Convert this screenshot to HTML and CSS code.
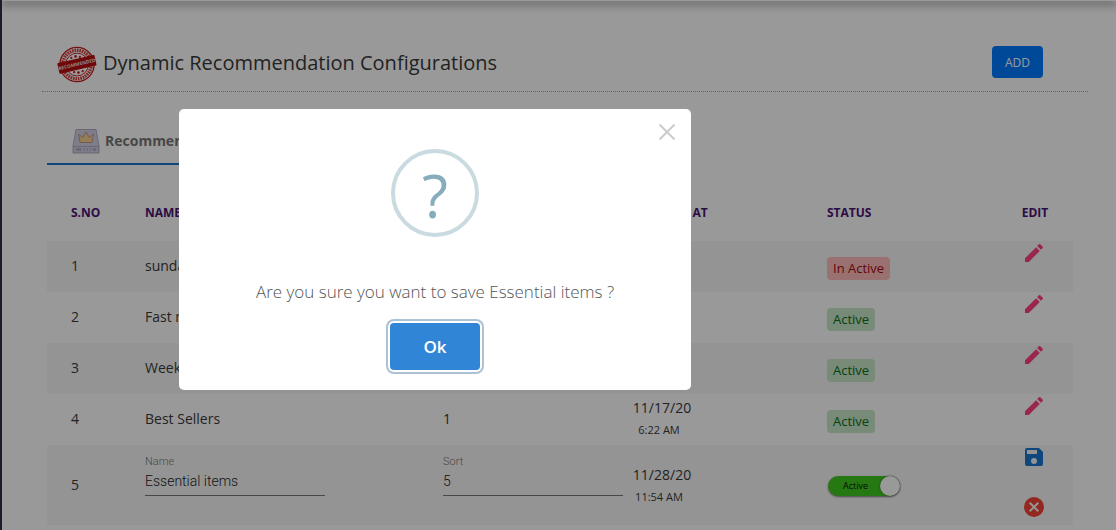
FILE: index.html
```
<!DOCTYPE html>
<html lang="en">
<head>
<meta charset="utf-8">
<title>Dynamic Recommendation Configurations</title>
<link rel="stylesheet" href="styles.css">
</head>
<body>
<svg class="defs" aria-hidden="true">
  <symbol id="pencil" viewBox="0 0 24 24"><path d="M3 17.25V21h3.75L17.81 9.94l-3.75-3.75L3 17.25zM20.71 7.04a1 1 0 0 0 0-1.41l-2.34-2.34a1 1 0 0 0-1.41 0l-1.83 1.83 3.75 3.75 1.83-1.83z"/></symbol>
  <symbol id="save" viewBox="0 0 24 24"><path d="M17 3H5a2 2 0 0 0-2 2v14a2 2 0 0 0 2 2h14a2 2 0 0 0 2-2V7l-4-4zm-5 16a3 3 0 1 1 0-6 3 3 0 0 1 0 6zm3-10H5V5h10v4z"/></symbol>
  <symbol id="cancel" viewBox="0 0 24 24"><path d="M12 2a10 10 0 1 0 0 20 10 10 0 0 0 0-20zm5 13.59L15.59 17 12 13.41 8.41 17 7 15.59 10.59 12 7 8.41 8.41 7 12 10.59 15.59 7 17 8.41 13.41 12 17 15.59z"/></symbol>
</svg>
<div class="topbar"></div>
<main class="page">
  <header class="page-head">
    <svg class="stamp" viewBox="0 0 40 40" aria-hidden="true">
      <circle cx="20" cy="19.500" r="18" fill="none" stroke="#c81e1e" stroke-width="1.400"/>
      <circle cx="20" cy="19.500" r="15" fill="none" stroke="#d04040" stroke-width="3.600" stroke-dasharray="1.700 .9"/>
      <circle cx="20" cy="19.500" r="12" fill="none" stroke="#c81e1e" stroke-width="1"/>
      <g fill="#c81e1e">
        <circle cx="14" cy="12.500" r="1.200"/><circle cx="18.500" cy="11" r="1.400"/><circle cx="23" cy="11.500" r="1.200"/>
        <circle cx="17" cy="27.500" r="1.200"/><circle cx="21.500" cy="28" r="1.400"/><circle cx="26" cy="26.500" r="1.200"/>
      </g>
      <g transform="rotate(-13 20 19.500)">
        <rect x="0" y="13.500" width="40" height="11.500" rx="1" fill="#b80e0e"/>
        <text class="stamp-text" x="20" y="21" text-anchor="middle">RECOMMENDED</text>
      </g>
    </svg>
    <h1 class="title">Dynamic Recommendation Configurations</h1>
    <button class="add" type="button">ADD</button>
  </header>
  <div class="content">
    <nav class="tabs">
      <a class="tab" href="#recommendation">
        <svg class="crown" viewBox="0 0 28 28" aria-hidden="true">
          <path d="M4 2.500h20l3 17H1z" fill="#d3d3e6" stroke="#b9a8c4"/>
          <path d="M1 19.500h26V26H1z" fill="#cfcde2" stroke="#b9a8c4"/>
          <path d="M8 15.500 6.500 7l4.200 3.500L14 5l3.300 5.500L21.500 7 20 15.500z" fill="#f7cf8c" stroke="#c4958c"/>
          <path d="M4 22.500h5M12 22.500h1M15 22.500h1M18 22.500h1M21 22.500h3" stroke="#aaa2bf" stroke-width="2"/>
        </svg>
        Recommendation
      </a>
    </nav>
    <table class="grid">
      <colgroup><col class="c-no"><col class="c-name"><col class="c-sort"><col class="c-date"><col><col class="c-edit"></colgroup>
      <thead>
        <tr><th>S.NO</th><th>NAME</th><th></th><th>UPDATED AT</th><th>STATUS</th><th class="edit">EDIT</th></tr>
      </thead>
      <tbody>
        <tr><td>1</td><td>sunday</td><td></td><td></td><td><span class="badge off">In Active</span></td><td class="edit"><button class="icon pink" type="button" aria-label="Edit"><svg><use href="#pencil"/></svg></button></td></tr>
        <tr><td>2</td><td>Fast moving</td><td></td><td></td><td><span class="badge">Active</span></td><td class="edit"><button class="icon pink" type="button" aria-label="Edit"><svg><use href="#pencil"/></svg></button></td></tr>
        <tr><td>3</td><td>Weekly</td><td></td><td></td><td><span class="badge">Active</span></td><td class="edit"><button class="icon pink" type="button" aria-label="Edit"><svg><use href="#pencil"/></svg></button></td></tr>
        <tr><td>4</td><td>Best Sellers</td><td>1</td><td><div class="stamp-time"><span>11/17/20</span><small>6:22 AM</small></div></td><td><span class="badge">Active</span></td><td class="edit"><button class="icon pink" type="button" aria-label="Edit"><svg><use href="#pencil"/></svg></button></td></tr>
        <tr class="editing">
          <td>5</td>
          <td><div class="field"><label for="name">Name</label><input id="name" type="text" value="Essential items"></div></td>
          <td><div class="field"><label for="sort">Sort</label><input id="sort" type="text" value="5"></div></td>
          <td><div class="stamp-time"><span>11/28/20</span><small>11:54 AM</small></div></td>
          <td><label class="switch"><input type="checkbox" checked><span>Active</span></label></td>
          <td class="edit"><div class="actions"><button class="icon blue" type="button" aria-label="Save"><svg><use href="#save"/></svg></button><button class="icon red" type="button" aria-label="Cancel"><svg><use href="#cancel"/></svg></button></div></td>
        </tr>
      </tbody>
    </table>
  </div>
</main>
<div class="overlay">
  <div class="modal" role="dialog" aria-modal="true" aria-labelledby="question">
    <button class="close" type="button" aria-label="Close"><svg viewBox="0 0 16 16"><path d="M0.500 0.500l15 15M15.500 0.500l-15 15"/></svg></button>
    <div class="mark">?</div>
    <p class="question" id="question">Are you sure you want to save Essential items ?</p>
    <button class="ok" type="button">Ok</button>
  </div>
</div>
</body>
</html>
```

FILE: styles.css
```
* { box-sizing: border-box; }
body {
  margin: 0;
  height: 100vh;
  overflow: hidden;
  border-left: 2px solid #2b3048;
  background: #fff;
  color: #3a3a3a;
  font: 14px/20px "Open Sans", "Noto Sans", sans-serif;
}
button { border: 0; padding: 0; font-family: inherit; cursor: pointer; }
.defs { display: none; }
.topbar { height: 1px; background: #fff; box-shadow: 0 2px 8px 1px rgba(0, 0, 0, .65); }

.page { padding: 44px 28px 0 40px; }
.page-head {
  display: flex;
  align-items: flex-start;
  height: 47px;
  padding: 1px 45px 0 15px;
  border-bottom: 1px dotted #aaa;
}
.stamp { width: 40px; height: 38px; }
.stamp-text { fill: #f2dede; font-size: 5px; font-weight: 700; }
.title { flex: 1; margin: 0 0 0 6px; font-size: 20px; line-height: 34px; font-weight: 400; }
.add { width: 51px; height: 32px; border-radius: 4px; background: #007bff; color: #fff; font-size: 12px; }

.content { padding: 28px 15px 0 5px; }
.tabs { display: flex; }
.tab {
  display: flex;
  align-items: center;
  gap: 5px;
  height: 45px;
  padding: 0 25px 2px;
  border-bottom: 2px solid #1976d2;
  color: #777;
  font-weight: 700;
  text-decoration: none;
}
.crown { width: 28px; height: 28px; }

.grid { width: 100%; margin-top: 20px; border-collapse: collapse; table-layout: fixed; }
.c-no { width: 98px; }
.c-name { width: 298px; }
.c-sort { width: 190px; }
.c-date { width: 194px; }
.c-edit { width: 78px; }
.grid th { height: 56px; padding: 0; color: #4b1374; font-size: 12px; font-weight: 700; text-align: left; }
.grid td { height: 51px; padding: 0 0 2px; }
.grid th:first-child, .grid td:first-child { padding-left: 24px; }
.grid tbody tr:nth-child(odd) { background: #f7f7f7; }
.grid .edit { padding: 0; text-align: center; vertical-align: top; }
.grid th.edit { padding-left: 2px; vertical-align: middle; }
.grid .editing td { padding-bottom: 0; }
.badge {
  display: inline-block;
  margin-top: 6px;
  padding: 0 6px;
  border-radius: 4px;
  background: #c8e6c9;
  color: #0a7016;
  font-size: 13px;
  line-height: 23px;
}
.badge.off { background: #ffbcbc; color: #a80b0f; }
.icon { display: inline-block; width: 24px; height: 24px; background: none; vertical-align: top; }
.icon svg { display: block; width: 24px; height: 24px; fill: currentColor; }
.pink { color: #ff4081; }
.blue { color: #1976d2; }
.red { color: #f44336; }
.actions { display: flex; flex-direction: column; align-items: center; gap: 26px; padding-bottom: 6px; }
.stamp-time { display: inline-flex; flex-direction: column; align-items: center; width: 58px; padding-top: 3px; vertical-align: middle; }
.stamp-time small { font-size: 11px; line-height: 24px; margin-right: 6px; white-space: nowrap; }
.field { display: flex; flex-direction: column; width: 180px; padding: 2px 0 22px; font-family: Roboto, sans-serif; font-weight: 300; }
.field label { color: #777; font-size: 11px; line-height: 16px; }
.field input {
  width: 100%;
  height: 26px;
  padding: 0 0 3px;
  border: 0;
  border-bottom: 1px solid #777;
  background: none;
  color: #212529;
  font: inherit;
}
.switch { display: inline-grid; align-items: center; width: 73px; margin-left: 1px; vertical-align: middle; }
.switch input {
  appearance: none;
  grid-area: 1 / 1;
  display: flex;
  justify-content: flex-end;
  width: 72px;
  height: 20px;
  margin: 0;
  border-radius: 10px;
  background: #3fc91e;
  box-shadow: 0 1px 2px rgba(0, 0, 0, .5);
}
.switch input::before { content: ""; width: 20px; height: 20px; border-radius: 50%; background: #fff; box-shadow: 0 0 2px rgba(0, 0, 0, .6); }
.switch span { grid-area: 1 / 1; padding-left: 15px; color: #111; font-size: 9px; }

.overlay {
  position: fixed;
  inset: 0;
  display: flex;
  align-items: center;
  justify-content: center;
  padding: 0 246px 31px 0;
  background: rgba(0, 0, 0, .4);
}
.modal {
  position: relative;
  display: flex;
  flex-direction: column;
  align-items: center;
  width: 512px;
  padding: 40px 20px 20px;
  border-radius: 5px;
  background: #fff;
}
.close { position: absolute; top: 15px; right: 16px; width: 16px; height: 16px; background: none; }
.close svg { display: block; width: 16px; height: 16px; stroke: #ccc; stroke-width: 2; fill: none; }
.mark {
  width: 88px;
  height: 88px;
  border: 4px solid #c9dae1;
  border-radius: 50%;
  color: #87adbd;
  font: 60px/84px "Open Sans", sans-serif;
  text-align: center;
}
.question { margin: 40px 0 16px; color: #545454; font-size: 17px; line-height: 30px; font-weight: 300; }
.ok {
  width: 90px;
  height: 47px;
  border-radius: 4px;
  background: #3085d6;
  box-shadow: 0 0 0 2px #fff, 0 0 0 4px rgba(50, 100, 150, .4);
  color: #fff;
  font-size: 17px;
  font-weight: 600;
}
```
